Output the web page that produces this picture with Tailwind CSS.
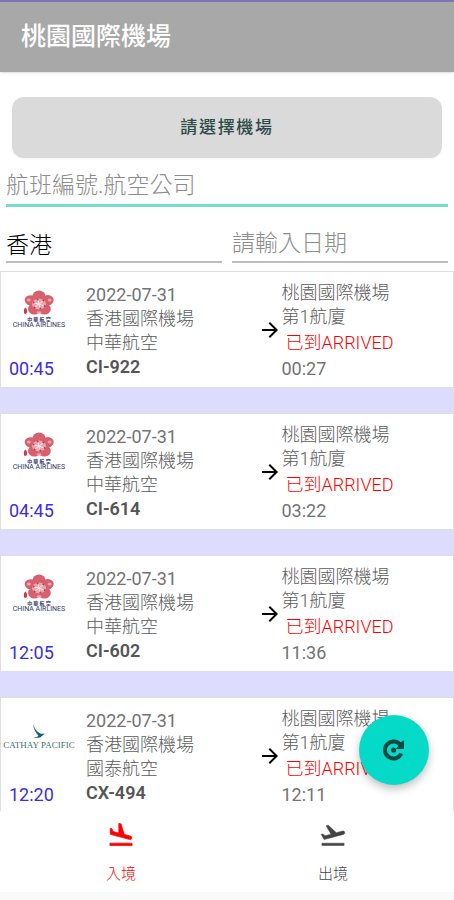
<!DOCTYPE html>
<html lang="zh-Hant">
<head>
    <meta charset="UTF-8">
    <meta name="viewport" content="width=device-width, initial-scale=1.0">
    <title>桃園國際機場</title>
    <script src="https://cdn.jsdelivr.net/npm/@tailwindcss/browser@4"></script>
</head>
<body class="bg-white font-['Roboto','Noto_Sans_CJK_TC',sans-serif]">
    <!-- Shared icons -->
    <svg class="hidden" aria-hidden="true">
        <symbol id="arrow" viewBox="0 0 24 24">
            <path d="M12 4l-1.41 1.41L16.17 11H4v2h12.17l-5.58 5.59L12 20l8-8z" fill="currentColor"/>
        </symbol>
        <symbol id="plum" viewBox="0 0 32 26">
            <g fill="#d6606e">
                <ellipse cx="16" cy="6.5" rx="6.6" ry="6"/>
                <ellipse cx="24" cy="10.6" rx="6.8" ry="5.4" transform="rotate(-15 24 10.6)"/>
                <ellipse cx="21.4" cy="19" rx="6.4" ry="5.6"/>
                <ellipse cx="11.4" cy="19" rx="6.4" ry="5.6"/>
                <ellipse cx="8.4" cy="10.6" rx="6.8" ry="5.2" transform="rotate(15 8.4 10.6)"/>
            </g>
            <g fill="#eba6ae">
                <ellipse cx="16" cy="14" rx="7" ry="5.4"/>
                <ellipse cx="5.8" cy="10" rx="2" ry="1.6"/>
                <ellipse cx="26.6" cy="10" rx="2" ry="1.6"/>
                <ellipse cx="16" cy="22.4" rx="2.4" ry="1.2"/>
            </g>
            <path d="M16 14l-1-4M16 14l4-3M16 14l5 2M16 14l1 4M16 14l-4 3M16 14l-5-1" stroke="#fbe8ea" stroke-width="1" fill="none"/>
            <g fill="#c43a4b">
                <circle cx="14.6" cy="9.4" r="1"/>
                <circle cx="20.4" cy="10.4" r="1"/>
                <circle cx="21.6" cy="16" r="1"/>
                <circle cx="17.4" cy="18.6" r="1"/>
                <circle cx="11.6" cy="17.4" r="1"/>
                <circle cx="10.6" cy="12.6" r="1"/>
            </g>
            <path d="M2.4 17.4c1.6 1 1.8 3 1.4 5.6-.6 1.4-2.2 1.4-2.8 0-.4-2.6 0-4.6 1.4-5.6z" fill="#c43a4b"/>
        </symbol>
        <symbol id="brushwing" viewBox="0 0 14 16">
            <path d="M1 0c1 4 3.6 7.4 7.2 9.4 2 .6 4 .4 5.2.2-2 1-3.4 2.2-4.6 3.6-2.2.8-5 .8-7.6.4 2.4-.2 4.4-.8 5.2-1.8C3.8 8.6 1.6 5 1 0z" fill="#0a6663"/>
        </symbol>
    </svg>

    <div class="flex h-screen flex-col">
        <!-- App bar -->
        <header class="flex h-[72px] shrink-0 items-center border-t-2 border-[#8074b8] bg-[#a8a8a8] px-[21px] shadow-sm">
            <h1 class="text-[25px] font-medium text-white">桃園國際機場</h1>
        </header>

        <main class="relative flex min-h-0 flex-1 flex-col">
            <!-- Search -->
            <form class="flex shrink-0 flex-col px-[6px] pt-[25px] pb-2">
                <button type="button" class="mx-[6px] h-[61px] rounded-xl bg-[#dadada] text-[17px] font-medium tracking-widest text-[#2c4a47] shadow-xs">請選擇機場</button>
                <input type="text" aria-label="航班編號.航空公司" placeholder="航班編號.航空公司" class="mt-[9px] h-10 border-b-3 border-[#76dccb] text-[23px] font-light text-[#222] outline-none placeholder:text-[#8c8c8c]">
                <div class="mt-[18px] flex gap-[10px]">
                    <input type="text" aria-label="出發地" value="香港" class="h-[38px] w-0 flex-1 border-b-2 border-[#bdbdbd] text-[23px] font-light text-black outline-none">
                    <input type="text" aria-label="日期" placeholder="請輸入日期" class="h-[38px] w-0 flex-1 border-b-2 border-[#bdbdbd] text-[23px] font-light text-[#222] outline-none placeholder:text-[#8c8c8c]">
                </div>
            </form>

            <!-- Flights -->
            <ul class="flex min-h-0 flex-1 flex-col gap-[25px] overflow-hidden bg-[#dddcff] text-lg leading-6 font-light text-[#5c5c5c]">
                <li class="grid h-[117px] shrink-0 grid-cols-[85px_1fr_24px_1fr] border border-[#dedede] bg-white">
                    <div class="flex flex-col pt-[18px] pb-[6px]">
                        <div class="flex w-[76px] flex-1 flex-col items-center text-[#33376b]">
                            <svg class="h-[26px] w-8"><use href="#plum"/></svg>
                            <span class="text-[5px] leading-[6px] font-bold">中 華 航 空</span>
                            <span class="text-[7px] leading-[7px] font-normal">CHINA AIRLINES</span>
                        </div>
                        <time class="pl-2 font-normal text-[#3a2ee0]">00:45</time>
                    </div>
                    <div class="pt-[11px]">
                        <p class="font-normal text-[#737373]">2022-07-31</p>
                        <p>香港國際機場</p>
                        <p>中華航空</p>
                        <p class="font-semibold text-[#555]">CI-922</p>
                    </div>
                    <svg class="size-6 self-center text-black"><use href="#arrow"/></svg>
                    <div class="pt-[9px]">
                        <p>桃園國際機場</p>
                        <p>第1航廈</p>
                        <p class="mt-[2px] pl-1 text-[#ff0000]">已到ARRIVED</p>
                        <p class="mt-[2px] font-normal text-[#737373]">00:27</p>
                    </div>
                </li>
                <li class="grid h-[117px] shrink-0 grid-cols-[85px_1fr_24px_1fr] border border-[#dedede] bg-white">
                    <div class="flex flex-col pt-[18px] pb-[6px]">
                        <div class="flex w-[76px] flex-1 flex-col items-center text-[#33376b]">
                            <svg class="h-[26px] w-8"><use href="#plum"/></svg>
                            <span class="text-[5px] leading-[6px] font-bold">中 華 航 空</span>
                            <span class="text-[7px] leading-[7px] font-normal">CHINA AIRLINES</span>
                        </div>
                        <time class="pl-2 font-normal text-[#3a2ee0]">04:45</time>
                    </div>
                    <div class="pt-[11px]">
                        <p class="font-normal text-[#737373]">2022-07-31</p>
                        <p>香港國際機場</p>
                        <p>中華航空</p>
                        <p class="font-semibold text-[#555]">CI-614</p>
                    </div>
                    <svg class="size-6 self-center text-black"><use href="#arrow"/></svg>
                    <div class="pt-[9px]">
                        <p>桃園國際機場</p>
                        <p>第1航廈</p>
                        <p class="mt-[2px] pl-1 text-[#ff0000]">已到ARRIVED</p>
                        <p class="mt-[2px] font-normal text-[#737373]">03:22</p>
                    </div>
                </li>
                <li class="grid h-[117px] shrink-0 grid-cols-[85px_1fr_24px_1fr] border border-[#dedede] bg-white">
                    <div class="flex flex-col pt-[18px] pb-[6px]">
                        <div class="flex w-[76px] flex-1 flex-col items-center text-[#33376b]">
                            <svg class="h-[26px] w-8"><use href="#plum"/></svg>
                            <span class="text-[5px] leading-[6px] font-bold">中 華 航 空</span>
                            <span class="text-[7px] leading-[7px] font-normal">CHINA AIRLINES</span>
                        </div>
                        <time class="pl-2 font-normal text-[#3a2ee0]">12:05</time>
                    </div>
                    <div class="pt-[11px]">
                        <p class="font-normal text-[#737373]">2022-07-31</p>
                        <p>香港國際機場</p>
                        <p>中華航空</p>
                        <p class="font-semibold text-[#555]">CI-602</p>
                    </div>
                    <svg class="size-6 self-center text-black"><use href="#arrow"/></svg>
                    <div class="pt-[9px]">
                        <p>桃園國際機場</p>
                        <p>第1航廈</p>
                        <p class="mt-[2px] pl-1 text-[#ff0000]">已到ARRIVED</p>
                        <p class="mt-[2px] font-normal text-[#737373]">11:36</p>
                    </div>
                </li>
                <li class="grid h-[117px] shrink-0 grid-cols-[85px_1fr_24px_1fr] border border-[#dedede] bg-white">
                    <div class="flex flex-col pt-[26px] pb-[6px]">
                        <div class="flex w-[76px] flex-1 flex-col items-center text-[#3f6f6c]">
                            <svg class="h-4 w-[14px]"><use href="#brushwing"/></svg>
                            <span class="font-['Liberation_Serif',serif] text-[9px] leading-[11px] font-normal whitespace-nowrap">CATHAY PACIFIC</span>
                        </div>
                        <time class="pl-2 font-normal text-[#3a2ee0]">12:20</time>
                    </div>
                    <div class="pt-[11px]">
                        <p class="font-normal text-[#737373]">2022-07-31</p>
                        <p>香港國際機場</p>
                        <p>國泰航空</p>
                        <p class="font-semibold text-[#555]">CX-494</p>
                    </div>
                    <svg class="size-6 self-center text-black"><use href="#arrow"/></svg>
                    <div class="pt-[9px]">
                        <p>桃園國際機場</p>
                        <p>第1航廈</p>
                        <p class="mt-[2px] pl-1 text-[#ff0000]">已到ARRIVED</p>
                        <p class="mt-[2px] font-normal text-[#737373]">12:11</p>
                    </div>
                </li>
            </ul>

            <!-- Refresh button -->
            <button type="button" aria-label="重新整理" class="absolute right-[25px] bottom-[26px] flex size-[70px] items-center justify-center rounded-full bg-[#05d9c7] text-[#124844] shadow-[0_4px_8px_#00000040]">
                <svg class="size-7" viewBox="0 0 28 28" fill="none">
                    <path d="M20.6 9.4A8.5 8.5 0 1 0 21.2 17.5" stroke="currentColor" stroke-width="4"/>
                    <path d="M24 4.5v8.5h-8.5z" fill="currentColor"/>
                    <path d="M20 6.5l4-2v8.500h-4z" fill="currentColor"/>
                    <circle cx="13.5" cy="14" r="2.6" fill="currentColor"/>
                </svg>
            </button>
        </main>

        <!-- Bottom navigation -->
        <nav class="shrink-0 border-b-8 border-[#fafafa] bg-white">
            <div class="mx-auto flex h-[81px] max-w-[424px] text-[15px] leading-5">
                <a href="#" class="flex flex-1 flex-col items-center justify-between pt-[10px] pb-2 text-[#ff0000]">
                    <svg class="size-7" viewBox="0 0 24 24" fill="currentColor" stroke="currentColor" stroke-width=".6"><path d="M2.5 19h19v2h-19zm7.18-5.73l4.35 1.16 5.31 1.42c.8.21 1.62-.26 1.84-1.06.21-.8-.26-1.62-1.06-1.84l-5.31-1.42-2.76-9.02L10.12 2v8.28L5.15 8.95l-.93-2.32-1.45-.39v5.17l1.6.43 5.31 1.43z"/></svg>
                    <span class="font-light">入境</span>
                </a>
                <a href="#" class="flex flex-1 flex-col items-center justify-between pt-[10px] pb-2 text-[#444]">
                    <svg class="size-7" viewBox="0 0 24 24" fill="currentColor" stroke="currentColor" stroke-width=".4"><path d="M2.5 19h19v2h-19zm19.57-9.36c-.21-.8-1.04-1.28-1.84-1.06L14.92 10l-6.9-6.43-1.93.51 4.14 7.17-4.97 1.33-1.97-1.54-1.45.39 1.82 3.16.77 1.33 1.6-.43 5.31-1.42 4.35-1.16L21 11.49c.81-.23 1.28-1.05 1.07-1.85z"/></svg>
                    <span class="font-light">出境</span>
                </a>
            </div>
        </nav>
    </div>
</body>
</html>
